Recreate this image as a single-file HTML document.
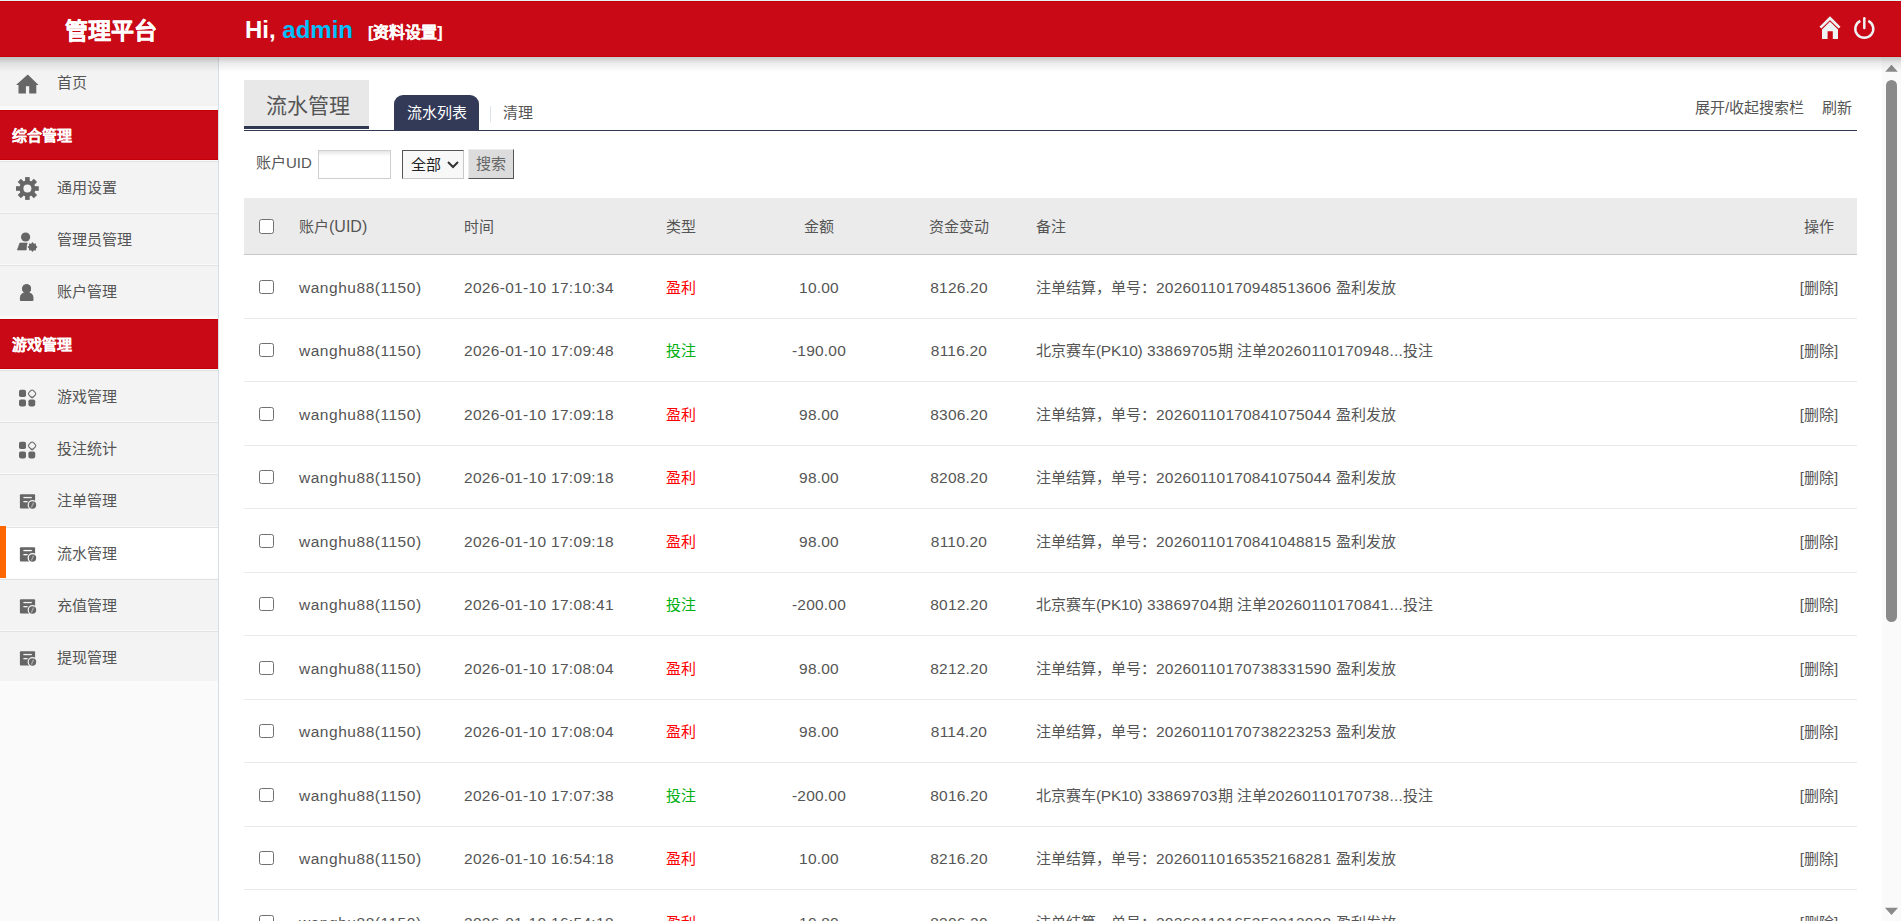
<!DOCTYPE html>
<html lang="zh-CN"><head><meta charset="utf-8">
<style>
*{box-sizing:border-box;margin:0;padding:0}
html,body{width:1901px;height:921px;overflow:hidden;background:#fff;font-family:"Liberation Sans",sans-serif;color:#555}
.abs{position:absolute}
#topline{left:0;top:0;width:1901px;height:1px;background:#e4f6f4}
#hdr{left:0;top:1px;width:1901px;height:56px;background:#c90a16;border-top:1px solid #c80008;border-bottom:1px solid #c70008;z-index:5}
#shadow{left:0;top:57px;width:1901px;height:16px;z-index:6;background:linear-gradient(to bottom,rgba(120,140,140,.42) 0,rgba(0,0,0,.2) 1px,rgba(0,0,0,.08) 6px,rgba(0,0,0,0) 15px)}
#logo{left:2px;top:14px;width:218px;text-align:center;color:#fff;font-size:23px;font-weight:bold;line-height:30px;-webkit-text-stroke:0.35px #fff}
#hi{left:245px;top:13px;color:#fff;font-size:24px;font-weight:bold;line-height:30px;white-space:nowrap}
#hi .u{color:#00bfff}
#hi .set{font-size:16px;margin-left:15px;-webkit-text-stroke:0.15px #fff}
#side{left:0;top:57px;width:219px;height:864px;background:#fafafa;border-right:1px solid #d6dfe5}
.mi{position:absolute;left:0;width:218px;height:52px;background:#f3f3f3;border-top:1px solid #e2e2e2;border-bottom:1px solid #fafafa}
.mi .t{position:absolute;left:57px;top:16px;font-size:15px;line-height:19px;color:#555;white-space:nowrap}
.mi svg{position:absolute;left:0;top:-1px;overflow:visible}
.mh{position:absolute;left:0;width:218px;height:50px;background:#c90a16;border-top:1px solid #c60008;border-bottom:1px solid #c60008;color:#fff;font-weight:bold;font-size:15px;line-height:49px;padding-left:12px;-webkit-text-stroke:0.1px #fff}
.mi.act{background:#fff}
.mi.act:before{content:"";position:absolute;left:0;top:-2px;width:6px;height:52px;background:#ff6600}
#main{left:219px;top:57px;width:1663px;height:864px;background:#fff;overflow:hidden}
#sb{left:1882px;top:57px;width:19px;height:864px;background:#fafafa}

#tab1{left:244px;top:80px;width:125px;height:49px;background:#e8e8e8;border-bottom:3px solid #2f3752;font-size:21px;line-height:52px;text-align:center;color:#555;padding-left:2px}
#hline{left:244px;top:130px;width:1613px;height:1px;background:#2f3752}
#tab2{left:394px;top:95px;width:85px;height:36px;background:#323a58;border-radius:9px 9px 0 0;color:#fff;font-size:15px;line-height:36px;text-align:center}
#sep{left:490px;top:106px;width:1px;height:16px;background:#dde3ea}
#clean{left:503px;top:103px;font-size:15px;line-height:19px;color:#555}
#tog{left:1695px;top:98px;font-size:15px;line-height:19px;color:#555;white-space:nowrap}
#ref{left:1822px;top:98px;font-size:15px;line-height:19px;color:#555}
#lbl{left:256px;top:153px;font-size:15px;line-height:19px;color:#555;white-space:nowrap}
#inp{left:318px;top:150px;width:73px;height:29px;border:1px solid #cfcfcf;background:linear-gradient(#e6e6e6,#fdfdfd 5px,#fff 6px)}
#sel{left:402px;top:150px;width:62px;height:29px;background:#f8f8f8;border-top:1px solid #555;border-left:1px solid #555;border-right:1px solid #c8c8c8;border-bottom:1px solid #c8c8c8;font-size:15px;line-height:27px;color:#222;padding-left:8px}
#sel svg{position:absolute;left:44px;top:10px}
#btn{left:468px;top:149px;width:46px;height:30px;background:#dcdcdc;border-top:1px solid #ececec;border-left:1px solid #ececec;border-right:1.5px solid #555;border-bottom:1.5px solid #555;font-size:15px;line-height:28px;color:#666;text-align:center}
#thead{left:244px;top:198px;width:1613px;height:57px;background:#ebebeb;border-bottom:1px solid #c8c8c8;font-size:15px;line-height:56px;color:#555}
.row{position:absolute;left:244px;width:1613px;border-bottom:1px solid #eaeaea;font-size:15.5px;letter-spacing:0.2px;color:#555;white-space:nowrap}
.row>span,#thead>span{position:absolute;top:1px}
.c{font-size:15px;letter-spacing:0}
.cb{position:absolute;left:15px;top:50%;margin-top:-7px;width:14.5px;height:14.5px;border:1.2px solid #707070;border-radius:2.5px;background:#fff}
.c1{left:55px}.c2{left:220px}.row>.c1{letter-spacing:0.53px}.row>.c2{letter-spacing:0.31px}.c3{left:422px}
.c4{left:525px;width:100px;text-align:center}
.c5{left:665px;width:100px;text-align:center}
.c6{left:792px}
.c7{left:1525px;width:100px;text-align:center}
#tog span{font-size:15px}.pk{letter-spacing:-0.3px}.red{color:#f00}.grn{color:#00b012}
</style></head><body>
<div id="topline" class="abs"></div>
<div id="hdr" class="abs">
  <div id="logo" class="abs">管理平台</div>
  <div id="hi" class="abs">Hi, <span class="u">admin</span><span class="set">[资料设置]</span></div>
</div>
<div id="shadow" class="abs"></div>
  <svg class="abs" style="z-index:7;left:1810px;top:9px" width="80" height="40">
    <path d="M10.4 18.6 L20 9.2 L29.6 18.6" fill="none" stroke="#eef3f3" stroke-width="2.7"/>
    <path d="M12 20.6 L20 12.4 L28 20.6 L28 29.9 L22.8 29.9 L22.8 22.2 L17.6 22.2 L17.6 29.9 L12 29.9 Z" fill="#eef3f3"/>
    <path d="M50.3 11.8 A9 9 0 1 0 58.3 11.8" fill="none" stroke="#eef3f3" stroke-width="2.5"/>
    <path d="M54.3 9.3 L54.3 19.1" fill="none" stroke="#eef3f3" stroke-width="2.5" stroke-linecap="round"/>
  </svg>

<div id="side" class="abs">
<div class="mh" style="top:53px">综合管理</div>
<div class="mh" style="top:262px">游戏管理</div>
<div class="mi" style="top:-1px;height:51px"><svg width="50" height="52"><path d="M16 29 L27.75 18.5 L38.6 29 L36.3 29 L36.3 37.6 L29.2 37.6 L29.2 30.3 L25.9 30.3 L25.9 37.6 L18.5 37.6 L18.5 29 Z" fill="#666"/></svg><div class="t">首页</div></div>
<div class="mi" style="top:104px;height:52px"><svg width="50" height="52"><rect x="25.099999999999998" y="16.1" width="4.6" height="22.8" transform="rotate(0 27.4 27.5)" fill="#666"/><rect x="25.099999999999998" y="16.1" width="4.6" height="22.8" transform="rotate(45 27.4 27.5)" fill="#666"/><rect x="25.099999999999998" y="16.1" width="4.6" height="22.8" transform="rotate(90 27.4 27.5)" fill="#666"/><rect x="25.099999999999998" y="16.1" width="4.6" height="22.8" transform="rotate(135 27.4 27.5)" fill="#666"/><circle cx="27.4" cy="27.5" r="8" fill="#666"/><circle cx="27.4" cy="27.5" r="4" fill="#f3f3f3"/></svg><div class="t">通用设置</div></div>
<div class="mi" style="top:156px;height:52px"><svg width="50" height="52"><circle cx="25.6" cy="24" r="4.6" fill="#666"/><path d="M19.8 30 L27.2 30 L26.2 37 L17.3 37 Z" fill="#666" stroke="#666" stroke-width="0.6" stroke-linejoin="round"/><circle cx="32.5" cy="34" r="5.6" fill="#f3f3f3"/><polygon points="32.50,29.00 33.88,30.67 36.04,30.46 35.83,32.62 37.50,34.00 35.83,35.38 36.04,37.54 33.88,37.33 32.50,39.00 31.12,37.33 28.96,37.54 29.17,35.38 27.50,34.00 29.17,32.62 28.96,30.46 31.12,30.67" fill="#666"/><circle cx="32.5" cy="34" r="3.3" fill="#666"/></svg><div class="t">管理员管理</div></div>
<div class="mi" style="top:208px;height:52px"><svg width="50" height="52"><circle cx="26.6" cy="23.7" r="4.5" fill="#666"/><circle cx="26.6" cy="23.7" r="5.4" fill="none" stroke="#f3f3f3" stroke-width="0.9"/><path d="M19.9 35 L19.9 33 Q19.9 27.3 26.7 27.3 Q33.5 27.3 33.5 33 L33.5 35 Q33.5 36 32.5 36 L20.9 36 Q19.9 36 19.9 35 Z" fill="#666"/><circle cx="26.6" cy="23.7" r="4.5" fill="#666"/></svg><div class="t">账户管理</div></div>
<div class="mi" style="top:313px;height:52px"><svg width="50" height="52"><rect x="19" y="19.8" width="7" height="7.3" rx="1.8" fill="#666"/><rect x="19" y="29.4" width="7" height="7" rx="1.8" fill="#666"/><rect x="28.4" y="29.4" width="6.8" height="7" rx="1.8" fill="#666"/><rect x="29" y="20.6" width="6.2" height="6.2" rx="1.9" transform="rotate(45 32.1 23.7)" fill="none" stroke="#6a6a6a" stroke-width="1.1"/><path d="M32.1 28.2 L32.1 29.4" stroke="#bbb" stroke-width="1.6"/></svg><div class="t">游戏管理</div></div>
<div class="mi" style="top:365px;height:52px"><svg width="50" height="52"><rect x="19" y="19.8" width="7" height="7.3" rx="1.8" fill="#666"/><rect x="19" y="29.4" width="7" height="7" rx="1.8" fill="#666"/><rect x="28.4" y="29.4" width="6.8" height="7" rx="1.8" fill="#666"/><rect x="29" y="20.6" width="6.2" height="6.2" rx="1.9" transform="rotate(45 32.1 23.7)" fill="none" stroke="#6a6a6a" stroke-width="1.1"/><path d="M32.1 28.2 L32.1 29.4" stroke="#bbb" stroke-width="1.6"/></svg><div class="t">投注统计</div></div>
<div class="mi" style="top:417px;height:53px"><svg width="50" height="52"><rect x="19.9" y="20.3" width="15.2" height="14.3" rx="1" fill="#666"/><rect x="23.4" y="22.9" width="8.4" height="1.3" fill="#f3f3f3"/><rect x="23.4" y="27" width="4.2" height="1.3" fill="#f3f3f3"/><circle cx="32.5" cy="31" r="4.9" fill="#f3f3f3"/><circle cx="32.5" cy="31" r="3.7" fill="#666"/><path d="M33.6 28.5 L31.4 33.5" stroke="#aaa" stroke-width="1.2"/></svg><div class="t">注单管理</div></div>
<div class="mi act" style="top:470px;height:52px"><svg width="50" height="52"><rect x="19.9" y="20.3" width="15.2" height="14.3" rx="1" fill="#666"/><rect x="23.4" y="22.9" width="8.4" height="1.3" fill="#fff"/><rect x="23.4" y="27" width="4.2" height="1.3" fill="#fff"/><circle cx="32.5" cy="31" r="4.9" fill="#fff"/><circle cx="32.5" cy="31" r="3.7" fill="#666"/><path d="M33.6 28.5 L31.4 33.5" stroke="#aaa" stroke-width="1.2"/></svg><div class="t">流水管理</div></div>
<div class="mi" style="top:522px;height:52px"><svg width="50" height="52"><rect x="19.9" y="20.3" width="15.2" height="14.3" rx="1" fill="#666"/><rect x="23.4" y="22.9" width="8.4" height="1.3" fill="#f3f3f3"/><rect x="23.4" y="27" width="4.2" height="1.3" fill="#f3f3f3"/><circle cx="32.5" cy="31" r="4.9" fill="#f3f3f3"/><circle cx="32.5" cy="31" r="3.7" fill="#666"/><path d="M33.6 28.5 L31.4 33.5" stroke="#aaa" stroke-width="1.2"/></svg><div class="t">充值管理</div></div>
<div class="mi" style="top:574px;height:51px"><svg width="50" height="52"><rect x="19.9" y="20.3" width="15.2" height="14.3" rx="1" fill="#666"/><rect x="23.4" y="22.9" width="8.4" height="1.3" fill="#f3f3f3"/><rect x="23.4" y="27" width="4.2" height="1.3" fill="#f3f3f3"/><circle cx="32.5" cy="31" r="4.9" fill="#f3f3f3"/><circle cx="32.5" cy="31" r="3.7" fill="#666"/><path d="M33.6 28.5 L31.4 33.5" stroke="#aaa" stroke-width="1.2"/></svg><div class="t">提现管理</div></div>
</div>

<div id="main" class="abs"></div>

<div id="tab1" class="abs">流水管理</div>
<div id="hline" class="abs"></div>
<div id="tab2" class="abs">流水列表</div>
<div id="sep" class="abs"></div>
<div id="clean" class="abs">清理</div>
<div id="tog" class="abs">展开/收起搜索栏</div>
<div id="ref" class="abs">刷新</div>
<div id="lbl" class="abs">账户UID</div>
<div id="inp" class="abs"></div>
<div id="sel" class="abs">全部<svg width="12" height="8"><path d="M1 1 L6 6 L11 1" fill="none" stroke="#333" stroke-width="2"/></svg></div>
<div id="btn" class="abs">搜索</div>
<div id="thead" class="abs"><i class="cb"></i><span class="c1">账户<span style="font-size:16px">(UID)</span></span><span class="c2">时间</span><span class="c3">类型</span><span class="c4">金额</span><span class="c5">资金变动</span><span class="c6">备注</span><span class="c7">操作</span></div>
<div class="row" style="top:255px;height:64px;line-height:63px"><i class="cb"></i><span class="c1">wanghu88(1150)</span><span class="c2">2026-01-10 17:10:34</span><span class="c3 c red">盈利</span><span class="c4">10.00</span><span class="c5">8126.20</span><span class="c6"><span class="c">注单结算，单号：</span>20260110170948513606 <span class="c">盈利发放</span></span><span class="c7 c">[删除]</span></div>
<div class="row" style="top:318px;height:64px;line-height:63px"><i class="cb"></i><span class="c1">wanghu88(1150)</span><span class="c2">2026-01-10 17:09:48</span><span class="c3 c grn">投注</span><span class="c4">-190.00</span><span class="c5">8116.20</span><span class="c6"><span class="c">北京赛车</span><span class="pk">(PK10)</span> 33869705<span class="c">期</span> <span class="c">注单</span>20260110170948...<span class="c">投注</span></span><span class="c7 c">[删除]</span></div>
<div class="row" style="top:382px;height:64px;line-height:63px"><i class="cb"></i><span class="c1">wanghu88(1150)</span><span class="c2">2026-01-10 17:09:18</span><span class="c3 c red">盈利</span><span class="c4">98.00</span><span class="c5">8306.20</span><span class="c6"><span class="c">注单结算，单号：</span>20260110170841075044 <span class="c">盈利发放</span></span><span class="c7 c">[删除]</span></div>
<div class="row" style="top:445px;height:64px;line-height:63px"><i class="cb"></i><span class="c1">wanghu88(1150)</span><span class="c2">2026-01-10 17:09:18</span><span class="c3 c red">盈利</span><span class="c4">98.00</span><span class="c5">8208.20</span><span class="c6"><span class="c">注单结算，单号：</span>20260110170841075044 <span class="c">盈利发放</span></span><span class="c7 c">[删除]</span></div>
<div class="row" style="top:509px;height:64px;line-height:63px"><i class="cb"></i><span class="c1">wanghu88(1150)</span><span class="c2">2026-01-10 17:09:18</span><span class="c3 c red">盈利</span><span class="c4">98.00</span><span class="c5">8110.20</span><span class="c6"><span class="c">注单结算，单号：</span>20260110170841048815 <span class="c">盈利发放</span></span><span class="c7 c">[删除]</span></div>
<div class="row" style="top:572px;height:64px;line-height:63px"><i class="cb"></i><span class="c1">wanghu88(1150)</span><span class="c2">2026-01-10 17:08:41</span><span class="c3 c grn">投注</span><span class="c4">-200.00</span><span class="c5">8012.20</span><span class="c6"><span class="c">北京赛车</span><span class="pk">(PK10)</span> 33869704<span class="c">期</span> <span class="c">注单</span>20260110170841...<span class="c">投注</span></span><span class="c7 c">[删除]</span></div>
<div class="row" style="top:636px;height:64px;line-height:63px"><i class="cb"></i><span class="c1">wanghu88(1150)</span><span class="c2">2026-01-10 17:08:04</span><span class="c3 c red">盈利</span><span class="c4">98.00</span><span class="c5">8212.20</span><span class="c6"><span class="c">注单结算，单号：</span>20260110170738331590 <span class="c">盈利发放</span></span><span class="c7 c">[删除]</span></div>
<div class="row" style="top:699px;height:64px;line-height:63px"><i class="cb"></i><span class="c1">wanghu88(1150)</span><span class="c2">2026-01-10 17:08:04</span><span class="c3 c red">盈利</span><span class="c4">98.00</span><span class="c5">8114.20</span><span class="c6"><span class="c">注单结算，单号：</span>20260110170738223253 <span class="c">盈利发放</span></span><span class="c7 c">[删除]</span></div>
<div class="row" style="top:763px;height:64px;line-height:63px"><i class="cb"></i><span class="c1">wanghu88(1150)</span><span class="c2">2026-01-10 17:07:38</span><span class="c3 c grn">投注</span><span class="c4">-200.00</span><span class="c5">8016.20</span><span class="c6"><span class="c">北京赛车</span><span class="pk">(PK10)</span> 33869703<span class="c">期</span> <span class="c">注单</span>20260110170738...<span class="c">投注</span></span><span class="c7 c">[删除]</span></div>
<div class="row" style="top:826px;height:64px;line-height:63px"><i class="cb"></i><span class="c1">wanghu88(1150)</span><span class="c2">2026-01-10 16:54:18</span><span class="c3 c red">盈利</span><span class="c4">10.00</span><span class="c5">8216.20</span><span class="c6"><span class="c">注单结算，单号：</span>20260110165352168281 <span class="c">盈利发放</span></span><span class="c7 c">[删除]</span></div>
<div class="row" style="top:890px;height:64px;line-height:63px"><i class="cb"></i><span class="c1">wanghu88(1150)</span><span class="c2">2026-01-10 16:54:18</span><span class="c3 c red">盈利</span><span class="c4">10.80</span><span class="c5">8206.20</span><span class="c6"><span class="c">注单结算，单号：</span>20260110165352312038 <span class="c">盈利发放</span></span><span class="c7 c">[删除]</span></div>
<div id="sb" class="abs"><svg width="19" height="864" style="position:absolute;left:0;top:0">
<path d="M3.2 14.7 L9.5 7.8 L15.8 14.7 Z" fill="#8a8a8a"/>
<rect x="4" y="23" width="11" height="542" rx="5.5" fill="#8a8a8a"/>
<path d="M2.9 850.8 L16 850.8 L9.5 858 Z" fill="#8a8a8a"/>
</svg></div>
</body></html>
